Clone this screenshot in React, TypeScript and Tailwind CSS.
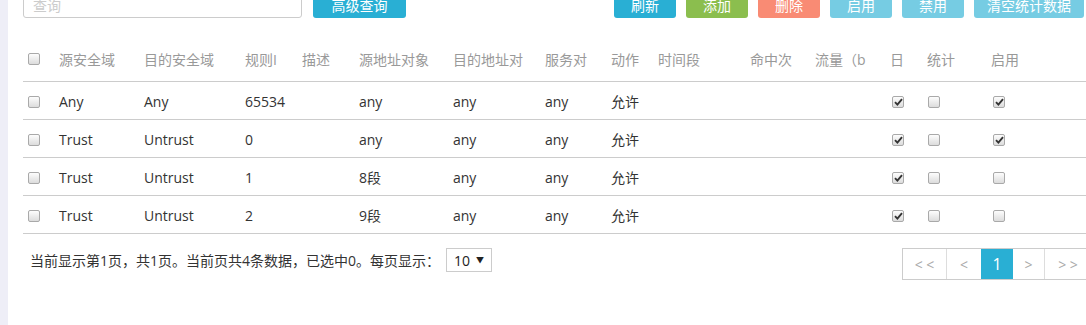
import { Fragment } from "react";

const font = { fontFamily: '"Open Sans", "Noto Sans CJK SC", sans-serif' };

const columns = [
  "",
  "源安全域",
  "目的安全域",
  "规则I",
  "描述",
  "源地址对象",
  "目的地址对",
  "服务对",
  "动作",
  "时间段",
  "命中次",
  "流量（b",
  "日",
  "统计",
  "启用",
];

const rows = [
  { src: "Any", dst: "Any", id: "65534", addr: "any", enabled: true },
  { src: "Trust", dst: "Untrust", id: "0", addr: "any", enabled: true },
  { src: "Trust", dst: "Untrust", id: "1", addr: "8段", enabled: false },
  { src: "Trust", dst: "Untrust", id: "2", addr: "9段", enabled: false },
];

function Check({ checked = false }: { checked?: boolean }) {
  return (
    <span className="inline-flex h-[12px] w-[12px] items-center justify-center rounded-[2px] border border-[#a9a9a9] bg-gradient-to-b from-[#fdfdfd] to-[#dcdcdc] align-middle">
      {checked && (
        <svg width="9" height="8" viewBox="0 0 9 8">
          <path d="M1 4.2 L3.4 6.6 L8 1.2" fill="none" stroke="#333" strokeWidth="1.9" />
        </svg>
      )}
    </span>
  );
}

const btn = "flex h-[26px] items-center justify-center rounded-[3px] text-[14px] text-white";

export default function App() {
  return (
    <div className="flex h-[325px] w-[1086px] overflow-hidden bg-white" style={font}>
      <div className="w-[8px] shrink-0 bg-[#eeeef7]" />
      <div className="flex min-w-0 flex-1 flex-col pl-[15px]">
        {/* toolbar, scrolled partly out of view */}
        <div className="-mt-[8px] flex items-start">
          <div className="flex h-[26px] w-[279px] items-center rounded-[3px] border border-[#cccccc] px-[9px] text-[14px] text-[#cccccc]">
            查询
          </div>
          <button className={`${btn} ml-[11px] w-[93px] bg-[#29afd4]`}>高级查询</button>
          <div className="ml-auto flex gap-[10px] pr-[2px]">
            <button className={`${btn} w-[62px] bg-[#29afd4]`}>刷新</button>
            <button className={`${btn} w-[62px] bg-[#8bbe4e]`}>添加</button>
            <button className={`${btn} w-[62px] bg-[#f98b74]`}>删除</button>
            <button className={`${btn} w-[62px] bg-[#76cce3]`}>启用</button>
            <button className={`${btn} w-[62px] bg-[#76cce3]`}>禁用</button>
            <button className={`${btn} w-[110px] bg-[#76cce3]`}>清空统计数据</button>
          </div>
        </div>

        {/* table */}
        <div className="mt-[20px] grid grid-cols-[36px_85px_101px_57px_57px_94px_92px_66px_47px_92px_65px_75px_37px_64px_1fr] text-[14px]">
          {columns.map((label, i) => (
            <div
              key={i}
              className={`flex h-[44px] items-center overflow-hidden whitespace-nowrap border-b border-[#cccccc] pb-[1px] text-[#999999] ${i === 0 ? "pl-[5px]" : ""}`}
            >
              {i === 0 ? <Check /> : label}
            </div>
          ))}
          {rows.map((r, ri) => {
            const cell = "flex h-[38px] items-center border-b border-[#cccccc] pt-[2px] text-[#333333] whitespace-nowrap";
            return (
              <Fragment key={ri}>
                <div className={`${cell} pl-[5px]`}><Check /></div>
                <div className={cell}>{r.src}</div>
                <div className={cell}>{r.dst}</div>
                <div className={cell}>{r.id}</div>
                <div className={cell}></div>
                <div className={cell}>{r.addr}</div>
                <div className={cell}>any</div>
                <div className={cell}>any</div>
                <div className={cell}>允许</div>
                <div className={cell}></div>
                <div className={cell}></div>
                <div className={cell}></div>
                <div className={`${cell} pl-[2px]`}><Check checked /></div>
                <div className={`${cell} pl-[1px]`}><Check /></div>
                <div className={`${cell} pl-[2px]`}><Check checked={r.enabled} /></div>
              </Fragment>
            );
          })}
        </div>

        {/* footer */}
        <div className="mt-[14px] flex items-start">
          <div className="flex h-[24px] items-center pl-[7px] text-[14px] text-[#333333]">
            当前显示第1页，共1页。当前页共4条数据，已选中0。每页显示：
            <span className="ml-[6px] flex h-[24px] w-[46px] items-center justify-center gap-[6px] border border-[#cccccc] text-[14px] text-[#222]">
              10 <span className="text-[8px]">▼</span>
            </span>
          </div>
          <div className="-mr-[6px] ml-auto flex h-[32px] border border-[#cccccc] text-[14px] text-[#aaaaaa]">
            <span className="flex w-[44px] items-center justify-center border-r border-[#dddddd]">&lt; &lt;</span>
            <span className="flex w-[34px] items-center justify-center">&lt;</span>
            <span className="flex w-[32px] items-center justify-center bg-[#29afd4] text-[16px] text-white">1</span>
            <span className="flex w-[32px] items-center justify-center border-r border-[#dddddd]">&gt;</span>
            <span className="flex w-[46px] items-center justify-center">&gt; &gt;</span>
          </div>
        </div>
      </div>
    </div>
  );
}
